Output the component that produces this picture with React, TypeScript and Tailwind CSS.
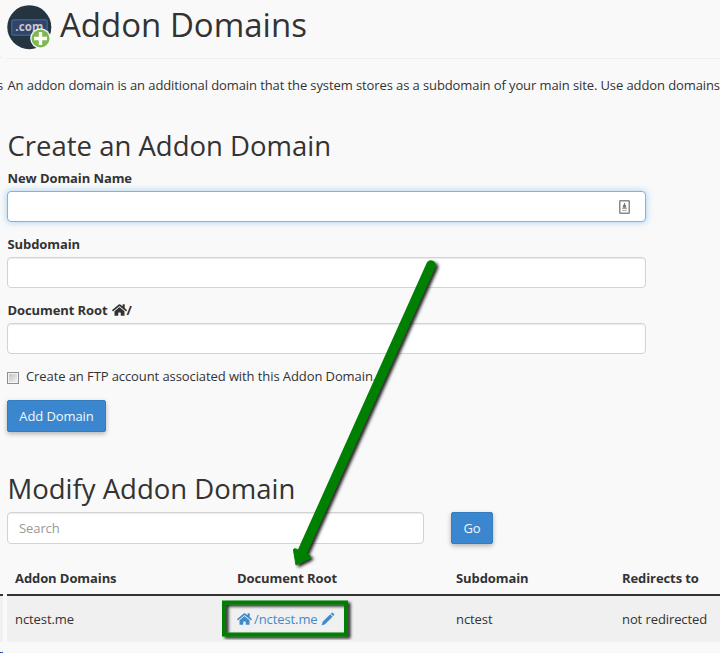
import React from "react";
import { FaHome } from "react-icons/fa";

function AddonLogo() {
  return (
    <svg className="mt-[5px] h-[46px] w-[46px] shrink-0" viewBox="0 0 46 46">
      <circle cx="22.3" cy="22.2" r="22" fill="#243440" />
      <rect x="4.8" y="14.8" width="35.5" height="15.4" rx="2.5" fill="#384264" stroke="#2a6496" strokeWidth="1.6" />
      <text x="8.2" y="26.4" fontSize="11.5" fontWeight="700" fill="#c6c9d1" textLength="28">.com</text>
      <circle cx="33.5" cy="33.5" r="10.3" fill="#f9f9f9" />
      <circle cx="33.5" cy="33.5" r="9" fill="#7fb750" />
      <path d="M33.5 27v13M27 33.5h13" stroke="#fff" strokeWidth="3.4" />
    </svg>
  );
}

function AutofillIcon() {
  return (
    <svg className="h-[14px] w-[11px]" viewBox="0 0 11 14">
      <rect x="0.75" y="0.75" width="9.5" height="12.5" rx="0.6" fill="#fff" stroke="#8a8a8a" strokeWidth="1.5" />
      <path d="M5.5 3v4M4.4 5.2h2.2v2H4.4zM3.2 8.2h4.6" stroke="#777" fill="#777" />
      <path d="M3.2 10.4h4.6" stroke="#aaa" />
    </svg>
  );
}

function Pencil() {
  return (
    <svg className="ml-[3px] h-[14px] w-[14px] fill-current" viewBox="0 0 14 14">
      <path d="M10.6 0.9 Q11.3 0.3 12 0.9 L13 1.9 Q13.6 2.6 13 3.3 L12.2 4.1 L9.8 1.7Z" />
      <path d="M9.2 2.3 L11.6 4.7 L4 12.2 L0.6 13.4 L1.7 9.8Z" />
    </svg>
  );
}

const label = "flex h-5 shrink-0 items-center whitespace-nowrap pl-[0.5px] font-bold";
const field = "h-[31px] w-[639px] rounded-[4px] border border-[#d3d3d3] bg-white shadow-[inset_0_1px_1px_rgba(0,0,0,0.08)]";
const button = "flex h-8 items-center justify-center rounded-[2px] border border-[#357ebd] bg-[#3a87cf] text-[#f2f7fc] shadow-[0_2px_5px_rgba(0,0,0,0.28)]";

export default function App() {
  return (
    <div className="relative flex h-[653px] w-[720px] overflow-hidden bg-[#f9f9f9] font-['Open_Sans','Noto_Sans',sans-serif] text-[13px] leading-5 tracking-[-0.09px] text-[#333]">
      <div className="flex h-full w-[3px] shrink-0 flex-col">
        <div className="h-[58px] shrink-0 border-b border-[#eee]" />
        <div className="mt-[17px] flex h-5 shrink-0 justify-end">s</div>
        <div className="mt-[499px] h-[2px] shrink-0 bg-[#333]" />
        <div className="h-[46px] shrink-0 bg-[#f0f0f0]" />
        <div className="mt-[10px] flex h-px shrink-0">
          <span className="w-px bg-[#223399]" />
          <span className="w-px bg-[#dd3333]" />
          <span className="w-px bg-[#3355cc]" />
        </div>
      </div>
      <main className="ml-1 flex w-[713px] shrink-0 flex-col">
        <header className="flex h-[59px] shrink-0 border-b border-[#eee]">
          <AddonLogo />
          <h1 className="ml-[7px] mt-[3px] whitespace-nowrap text-[33px] leading-[44px] tracking-normal">Addon Domains</h1>
        </header>
        <p className="mt-4 h-5 shrink-0 whitespace-nowrap pl-[0.5px] tracking-[-0.1px]">An addon domain is an additional domain that the system stores as a subdomain of your main site. Use addon domains</p>
        <h2 className="mt-[33px] h-[40px] shrink-0 whitespace-nowrap pl-[0.5px] text-[27.5px] leading-9 tracking-normal">Create an Addon Domain</h2>
        <div className={label}>New Domain Name</div>
        <div className="mt-[3px] flex h-[31px] w-[639px] shrink-0 items-center justify-end rounded-[4px] border border-[#7bb5e3] bg-white pr-[15px] shadow-[0_0_7px_rgba(102,175,233,0.6)]">
          <AutofillIcon />
        </div>
        <div className={label + " mt-3"}>Subdomain</div>
        <div className={field + " mt-[3px] shrink-0"} />
        <div className={label + " mt-3"}>
          Document Root
          <FaHome className="ml-1 h-[14px] w-[15px]" />/
        </div>
        <div className={field + " mt-[3px] shrink-0"} />
        <div className="mt-3 flex h-[22px] shrink-0 items-start">
          <span className="mt-[6px] h-3 w-3 border border-[#8e8f8f] bg-linear-to-br from-[#bcc1c7] to-[#f6f6f6] shadow-[inset_0_0_0_1px_#f4f4f4]" />
          <span className="ml-[7px]">Create an FTP account associated with this Addon Domain.</span>
        </div>
        <div className={button + " mt-3 w-[99px] shrink-0"}>Add Domain</div>
        <h2 className="mt-[39px] h-[41px] shrink-0 whitespace-nowrap pl-[0.5px] text-[27.5px] leading-9 tracking-normal">Modify Addon Domain</h2>
        <div className="flex shrink-0 gap-[27px]">
          <div className="flex h-8 w-[417px] items-center rounded-[4px] border border-[#d3d3d3] bg-white px-[11px] text-[#999] shadow-[inset_0_1px_1px_rgba(0,0,0,0.08)]">Search</div>
          <div className={button + " w-[42px]"}>Go</div>
        </div>
        <div className="mt-[18px] grid h-[34px] shrink-0 grid-cols-[222px_219px_166px_106px] items-center border-b-2 border-[#333] pl-2 font-bold">
          <span>Addon Domains</span>
          <span>Document Root</span>
          <span>Subdomain</span>
          <span>Redirects to</span>
        </div>
        <div className="grid h-[46px] shrink-0 grid-cols-[222px_219px_166px_106px] items-center bg-[#f0f0f0] pl-2">
          <span>nctest.me</span>
          <span className="flex items-center text-[#428bca]">
            <FaHome className="h-[14px] w-[15px]" />
            <span className="ml-[2px]">/nctest.me</span>
            <Pencil />
          </span>
          <span>nctest</span>
          <span>not redirected</span>
        </div>
      </main>
      <svg className="pointer-events-none absolute inset-0 h-full w-full" viewBox="0 0 720 653">
        <defs>
          <filter id="cast" x="-10%" y="-10%" width="125%" height="125%">
            <feDropShadow dx="2.5" dy="2" stdDeviation="1.4" floodColor="#000" floodOpacity="0.85" />
          </filter>
        </defs>
        <g filter="url(#cast)">
          <path d="M431 265 L303 550" stroke="#028002" strokeWidth="9.5" strokeLinecap="round" fill="none" />
          <path d="M296 565 L293.5 550 Q293.5 548 296 549 L309 555 Q312 557 309 558.5 Z" fill="#028002" stroke="#028002" strokeLinejoin="round" />
        </g>
        <rect x="224" y="602.5" width="122" height="32" fill="none" stroke="#028002" strokeWidth="4" filter="url(#cast)" />
      </svg>
    </div>
  );
}
